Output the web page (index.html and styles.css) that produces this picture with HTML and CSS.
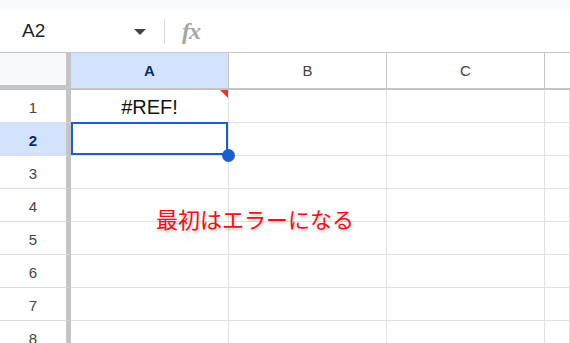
FILE: index.html
```html
<!DOCTYPE html>
<html>
<head>
  <meta charset="utf-8">
  <link rel="stylesheet" href="styles.css">
</head>
<body>
  <div class="top-strip"></div>

  <div class="formula-bar">
    <div class="name-box">
      <span class="name-text">A2</span>
      <span class="caret"></span>
    </div>
    <div class="bar-sep"></div>
    <span class="fx">fx</span>
  </div>

  <div class="sheet">
    <div class="grid">
      <!-- header row -->
      <div class="corner"></div>
      <div class="col-head active">A</div>
      <div class="col-head">B</div>
      <div class="col-head">C</div>
      <div class="col-head last"></div>

      <div class="row-head">1</div>
      <div class="cell value">#REF!<span class="err-flag"></span></div>
      <div class="cell"></div>
      <div class="cell"></div>
      <div class="cell"></div>

      <div class="row-head active">2</div>
      <div class="cell selected"><span class="fill-handle"></span></div>
      <div class="cell"></div>
      <div class="cell"></div>
      <div class="cell"></div>

      <div class="row-head">3</div>
      <div class="cell"></div><div class="cell"></div><div class="cell"></div><div class="cell"></div>

      <div class="row-head">4</div>
      <div class="cell"></div><div class="cell"></div><div class="cell"></div><div class="cell"></div>

      <div class="row-head">5</div>
      <div class="cell"></div><div class="cell"></div><div class="cell"></div><div class="cell"></div>

      <div class="row-head">6</div>
      <div class="cell"></div><div class="cell"></div><div class="cell"></div><div class="cell"></div>

      <div class="row-head">7</div>
      <div class="cell"></div><div class="cell"></div><div class="cell"></div><div class="cell"></div>

      <div class="row-head">8</div>
      <div class="cell"></div><div class="cell"></div><div class="cell"></div><div class="cell"></div>
    </div>

    <!-- annotation over the grid -->
    <div class="note">最初はエラーになる</div>
  </div>
</body>
</html>
```

FILE: styles.css
```css
body {
  margin: 0;
  width: 570px;
  height: 343px;
  overflow: hidden;
  background: #fff;
  font-family: 'Liberation Sans', Arial, sans-serif;
  color: #1f1f1f;
}

.top-strip {
  height: 10px;
  background: #f9fbfd;
}

.formula-bar {
  height: 42px;
  border-bottom: 1px solid #c7c7c7;
  display: flex;
  align-items: center;
  background: #fff;
}

.name-box {
  width: 164px;
  box-sizing: border-box;
  padding: 0 18px 0 22px;
  display: flex;
  align-items: center;
  justify-content: space-between;
}

.name-text {
  font-size: 19px;
  color: #1f1f1f;
}

.caret {
  width: 0;
  height: 0;
  border-left: 6px solid transparent;
  border-right: 6px solid transparent;
  border-top: 6px solid #444;
  margin-top: 1px;
}

.bar-sep {
  width: 1px;
  height: 25px;
  background: #dadce0;
}

.fx {
  margin-left: 17px;
  font-family: 'Liberation Serif', 'Times New Roman', serif;
  font-style: italic;
  font-weight: bold;
  font-size: 24px;
  color: #a6a6a6;
  letter-spacing: -1px;
}

.sheet {
  position: relative;
}

.grid {
  display: grid;
  grid-template-columns: 71px 158px 158px 158px 1fr;
  grid-template-rows: 37px repeat(8, 33px);
}

.corner {
  background: #f8f9fa;
  border-right: 5px solid #c4c4c4;
  border-bottom: 5px solid #c4c4c4;
}

.col-head {
  display: flex;
  align-items: center;
  justify-content: center;
  font-size: 15px;
  color: #444;
  border-right: 1px solid #c4c4c4;
  border-bottom: 2px solid #c4c4c4;
}

.col-head.active {
  background: #d3e3fd;
  color: #0b2e5f;
  font-weight: bold;
}

.col-head.last {
  border-right: none;
}

.row-head {
  display: flex;
  align-items: center;
  justify-content: center;
  font-size: 15px;
  color: #444;
  border-right: 5px solid #c4c4c4;
  border-bottom: 1px solid #dcdcdc;
  padding-top: 2px;
}

.row-head.active {
  background: #d3e3fd;
  color: #0b2e5f;
  font-weight: bold;
}

.cell {
  position: relative;
  border-right: 1px solid #e1e1e1;
  border-bottom: 1px solid #e1e1e1;
}

.cell.value {
  display: flex;
  align-items: center;
  justify-content: center;
  font-size: 20px;
  color: #111;
  padding-top: 2px;
}

.err-flag {
  position: absolute;
  top: 0;
  right: 0;
  width: 0;
  height: 0;
  border-left: 8px solid transparent;
  border-top: 8px solid #e0382f;
}

.cell.selected {
  box-shadow: inset 0 0 0 2px #1d5fc4;
  margin-top: -1px;
}

.fill-handle {
  position: absolute;
  right: -7px;
  bottom: -7px;
  width: 13px;
  height: 13px;
  border-radius: 50%;
  background: #1a5fd0;
  z-index: 2;
}

.note {
  position: absolute;
  left: 156px;
  top: 150px;
  font-family: 'Noto Sans CJK JP', sans-serif;
  font-size: 22px;
  line-height: 30px;
  color: #e8141b;
  text-shadow: 1px 2px 3px rgba(0, 0, 0, 0.25);
}
```
